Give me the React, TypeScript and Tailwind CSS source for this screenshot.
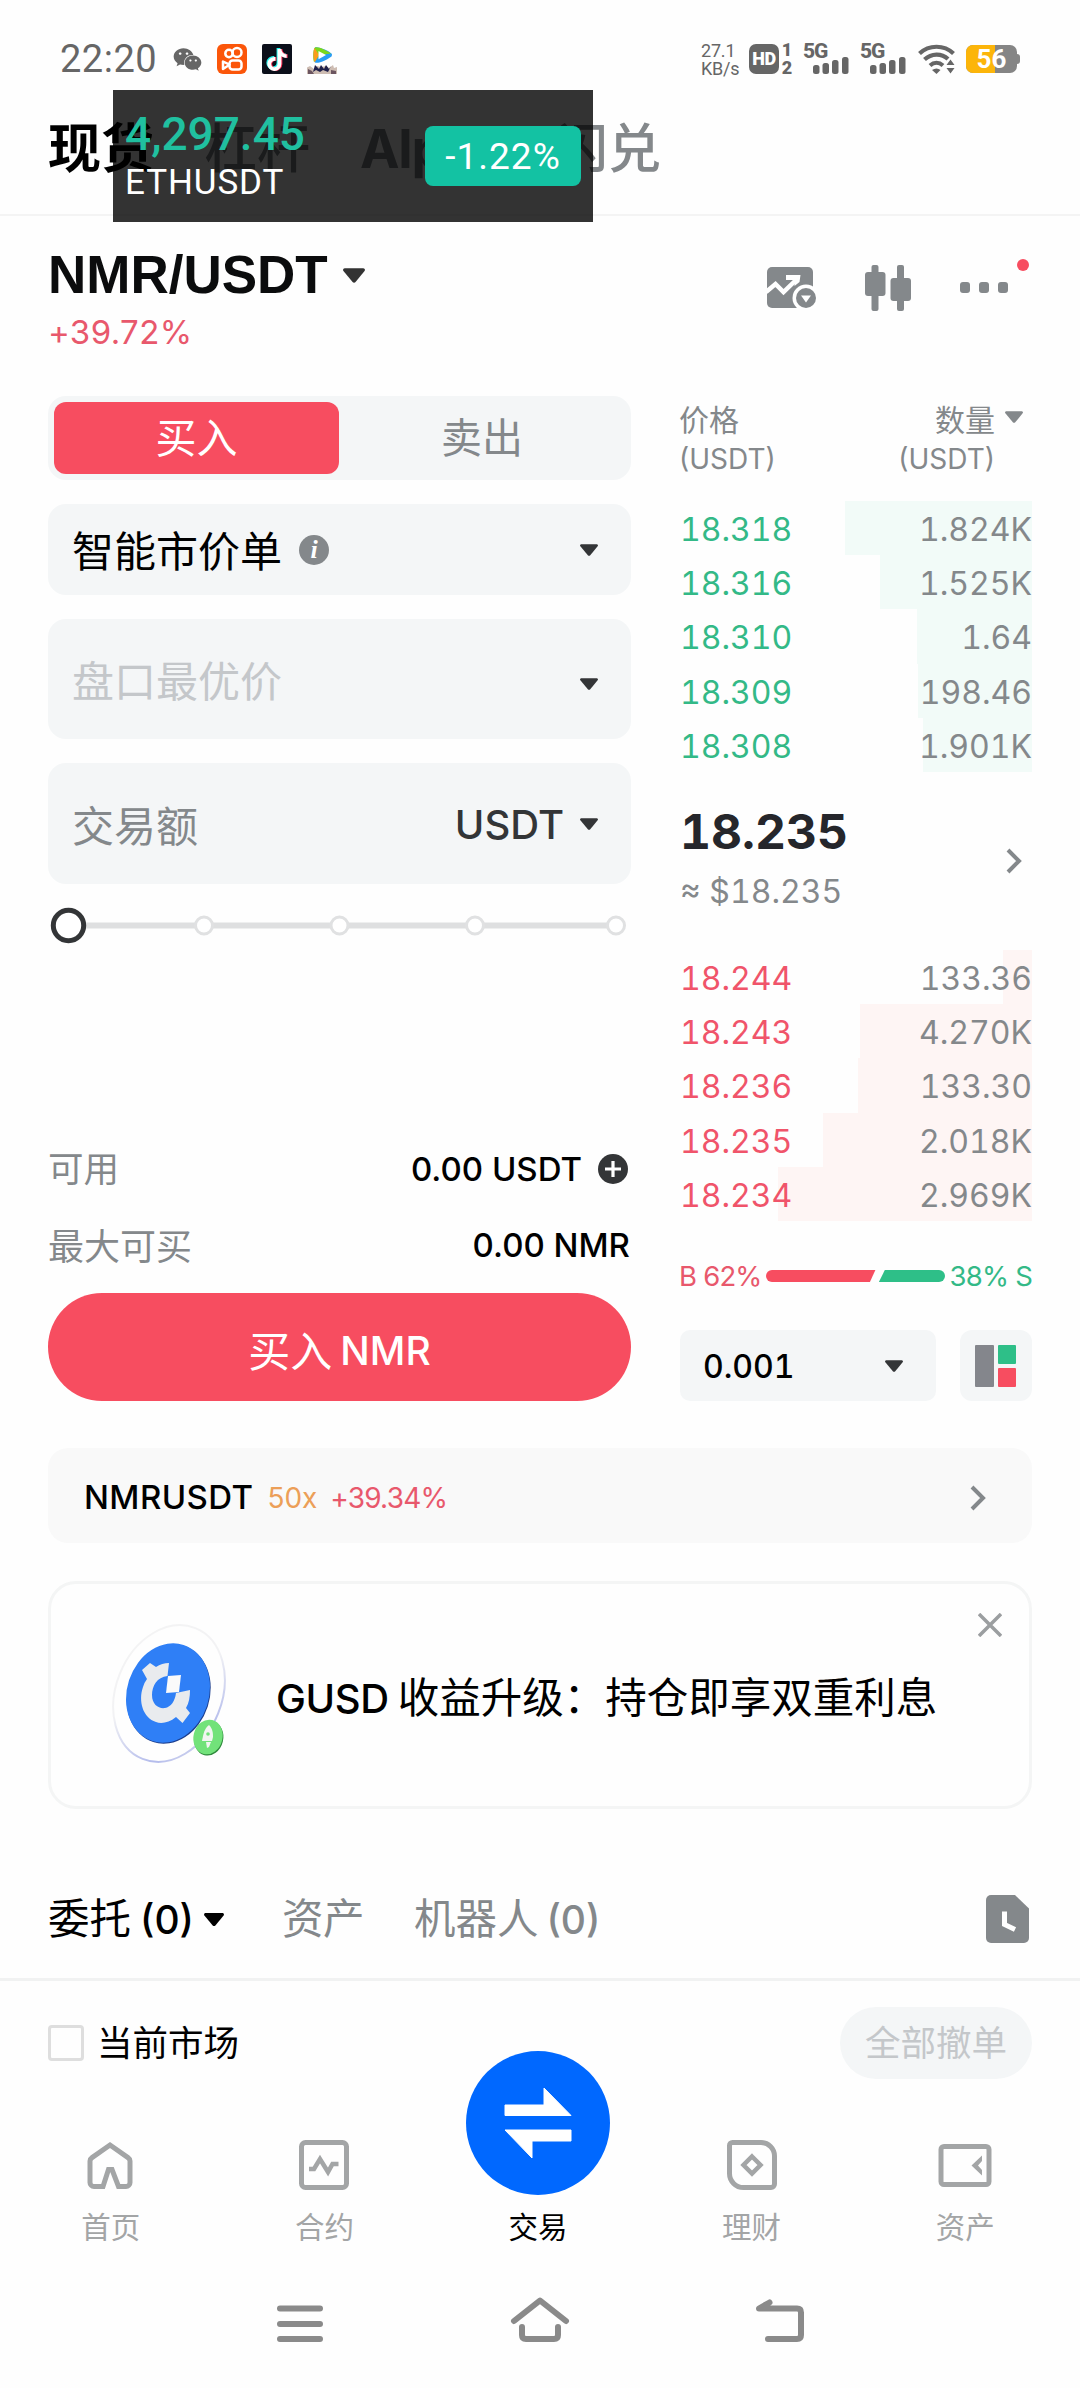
import type { ReactNode } from "react";
import clsx from "clsx";
import { FaTiktok, FaWeixin } from "react-icons/fa";

type BookRow = { price: string; amount: string; depth: number };

const asks: BookRow[] = [
  { price: "18.318", amount: "1.824K", depth: 187 },
  { price: "18.316", amount: "1.525K", depth: 152 },
  { price: "18.310", amount: "1.64", depth: 115 },
  { price: "18.309", amount: "198.46", depth: 114 },
  { price: "18.308", amount: "1.901K", depth: 109 },
];

const bids: BookRow[] = [
  { price: "18.244", amount: "133.36", depth: 29 },
  { price: "18.243", amount: "4.270K", depth: 172 },
  { price: "18.236", amount: "133.30", depth: 174 },
  { price: "18.235", amount: "2.018K", depth: 209 },
  { price: "18.234", amount: "2.969K", depth: 254 },
];

const Caret = ({ className }: { className?: string }) => (
  <svg viewBox="0 0 20 13" className={className} fill="currentColor">
    <path d="M1.600 0h16.800c1.300 0 2 1.400 1.200 2.400l-8.200 10c-.7.8-2 .8-2.700 0L.4 2.400C-.4 1.400.3 0 1.600 0z" />
  </svg>
);

const Chevron = ({ className }: { className?: string }) => (
  <svg
    viewBox="0 0 16 26"
    className={className}
    fill="none"
    stroke="#84888b"
    strokeWidth="4"
  >
    <path d="M2 2l11 11L2 24" />
  </svg>
);

const Signal = () => (
  <div className="relative w-[46px] h-[30px]">
    <span className="absolute left-0 -top-px text-[21px] leading-[17px] font-extrabold tracking-[-1.2px] font-['Roboto',sans-serif]">
      5G
    </span>
    <svg
      viewBox="0 0 36 17"
      className="absolute right-0 bottom-0 w-[36px] h-[17px]"
      fill="currentColor"
    >
      <rect x="0" y="8" width="6.5" height="9" rx="2.5" />
      <rect x="9.5" y="6" width="6.5" height="11" rx="2.5" />
      <rect x="19" y="3" width="6.5" height="14" rx="2.5" />
      <rect x="29" y="0" width="6.5" height="17" rx="2.5" />
    </svg>
  </div>
);

const StatusBar = () => (
  <div className="flex items-center h-[90px] pt-[28px] pl-[60px] pr-[60px] text-[#666] font-['Roboto',sans-serif]">
    <span className="w-[113px] text-[38px] leading-none tracking-[0.5px]">
      22:20
    </span>
    <FaWeixin className="w-[29px] h-[27px]" />
    <div className="ml-[15px] w-[30px] h-[30px] rounded-[6px] bg-[#fb560a]">
      <svg
        viewBox="0 0 30 30"
        fill="none"
        stroke="#fff"
        strokeWidth="2.5"
        strokeLinejoin="round"
      >
        <circle cx="12" cy="9.5" r="3.7" />
        <circle cx="20" cy="8.5" r="4.5" />
        <rect x="12.5" y="16.5" width="12" height="9" rx="3" />
        <path d="M12.500 20.700L6 17.500v7.500z" />
      </svg>
    </div>
    <div className="ml-[15px] relative w-[30px] h-[30px] rounded-[2px] bg-[#0b0f1a]">
      <FaTiktok className="absolute left-[4px] top-[4px] w-[20px] h-[22px] text-[#25f4ee]" />
      <FaTiktok className="absolute left-[6px] top-[5px] w-[20px] h-[22px] text-[#fe2c55]" />
      <FaTiktok className="absolute left-[5px] top-[4.5px] w-[20px] h-[22px] text-white" />
    </div>
    <svg viewBox="0 0 30 30" className="ml-[15px] w-[30px] h-[30px]">
      <path d="M8 3.500C11 2 22 7 24.500 9.500c.8.9.6 2 0 2.700C22 15 11 20 8 18.500c-2-1-2-14 0-15z" fill="#2a9df4" />
      <path d="M8 3.500C11 2 20 6.500 24 9.500L13 11 7 18C6 16 6 5 8 3.500z" fill="#7bd81c" />
      <path d="M7.500 4C6 6 6 16 7.800 18.200L12 11z" fill="#fb9c1b" />
      <path d="M11.500 7l7.500 4-7.500 4.300z" fill="#fff" />
      <path d="M0 23.500l3-1.500 4 3 3-3 4 1 5-1 3 2 4-3 1 3 3-1v7H0z" fill="#cdbcb2" />
      <path d="M8 21l4 4 2-4 3 4 2-4 3 4 2-3-3 6-5-2-3 2-4-2-3 2z" fill="#20204a" />
      <path d="M1 25l4 2 2 3H1zM24 26l5 1v3h-5z" fill="#6b5560" />
    </svg>

    <div className="ml-auto flex flex-col w-[38px] gap-[1px] text-[18px] leading-[17px] tracking-[-0.2px]">
      <span>27.1</span>
      <span>KB/s</span>
    </div>
    <div className="ml-[10px] flex items-center justify-center w-[30px] h-[30px] rounded-[7px] bg-[#666] text-white text-[18px] font-black leading-none tracking-[-0.5px]">
      HD
    </div>
    <div className="ml-[2px] flex flex-col items-center justify-between w-[12px] h-[34px] text-[18px] font-black leading-[16px]">
      <span>1</span>
      <span>2</span>
    </div>
    <div className="ml-[10px] flex gap-[11px]">
      <Signal />
      <Signal />
    </div>
    <svg viewBox="0 0 38 30" className="ml-[12px] w-[38px] h-[30px]">
      <g fill="none" stroke="#666" strokeWidth="4.2">
        <path d="M1.500 9.500C11 .5 26 .5 35.500 9.500" />
        <path d="M6.500 15.500C13.500 9 23.500 9 30 15" />
        <path d="M12 21.500c4-3.500 9-3.500 13 0" />
      </g>
      <path d="M14 26c3-2 6-2 8.500 0L18.500 30z" fill="#666" />
      <path d="M32.500 15.500l4 5.500h-8zM32.500 29.500l4-5.500h-8z" fill="#666" />
    </svg>
    <div className="ml-[10px] flex items-center">
      <div className="relative flex items-center justify-center w-[51px] h-[28px] rounded-[7px] overflow-hidden bg-[#858585]">
        <div className="absolute left-0 top-0 h-full w-[29px] bg-[#fcb50a]" />
        <span className="relative text-white text-[26px] font-bold leading-none">
          56
        </span>
      </div>
      <div className="w-[3px] h-[10px] rounded-r bg-[#858585]" />
    </div>
  </div>
);

const PriceOverlay = () => (
  <div className="absolute left-[113px] top-[90px] w-[480px] h-[132px] bg-black/80 font-['Roboto',sans-serif]">
    <div className="flex items-start justify-between h-full px-[12px]">
      <div className="flex flex-col pt-[21px]">
        <span className="text-[46px] leading-[46px] text-[#20c0a0] font-medium">
          4,297.45
        </span>
        <span className="mt-[8px] text-[35px] leading-[36px] text-white tracking-[0.9px]">
          ETHUSDT
        </span>
      </div>
      <div className="mt-[36px] flex items-center justify-center w-[156px] h-[60px] rounded-[8px] bg-[#13c2a3] text-white text-[37px] leading-none tracking-[1px]">
        -1.22%
      </div>
    </div>
  </div>
);

const PairHeader = () => (
  <div className="flex justify-between h-[180px] pl-[48px] pr-[50px]">
    <div className="flex flex-col pt-[31px]">
      <div className="flex items-center gap-[15px] text-[#0b0c0d]">
        <h1 className="text-[53px] leading-[56px] font-bold font-['Liberation_Sans',sans-serif]">
          NMR/USDT
        </h1>
        <Caret className="w-[22px] h-[15px] text-[#333]" />
      </div>
      <span className="mt-[9px] text-[33px] leading-[40px] tracking-[0.4px] text-[#e8586c]">
        +39.72%
      </span>
    </div>
    <div className="flex items-start pt-[49px] text-[#84888b]">
      <svg viewBox="0 0 50 42" className="mt-[2px] w-[50px] h-[42px]">
        <rect x="0" y="0" width="46" height="41" rx="5" fill="currentColor" />
        <path
          d="M-1 25l9.500-8 8 8L29 13"
          fill="none"
          stroke="#fff"
          strokeWidth="4.5"
        />
        <path d="M19 8h14.500l-1 7-5 4v-6H19z" fill="#fff" />
        <circle cx="39" cy="31" r="13.5" fill="#fff" />
        <circle cx="39" cy="31" r="10" fill="currentColor" />
        <path d="M34 28.500h10L39 35.500z" fill="#fff" />
      </svg>
      <svg
        viewBox="0 0 46 46"
        className="ml-[48px] w-[46px] h-[46px]"
        fill="currentColor"
      >
        <rect x="6.5" y="0" width="7" height="46" rx="2" />
        <rect x="0" y="7" width="20.5" height="24" rx="3" />
        <rect x="32" y="0" width="7" height="46" rx="2" />
        <rect x="25.5" y="13" width="20.5" height="23" rx="3" />
      </svg>
      <div className="relative ml-[49px] mt-[17px] mr-[22px] flex gap-[9px]">
        <span className="w-[10px] h-[11px] rounded-[3px] bg-[#84888b]" />
        <span className="w-[10px] h-[11px] rounded-[3px] bg-[#84888b]" />
        <span className="w-[10px] h-[11px] rounded-[3px] bg-[#84888b]" />
        <span className="absolute left-[57px] -top-[23px] w-[12px] h-[12px] rounded-full bg-[#f74d60]" />
      </div>
    </div>
  </div>
);

const Field = ({
  className,
  children,
}: {
  className?: string;
  children: ReactNode;
}) => (
  <div
    className={clsx(
      "flex items-center pl-[24px] pr-[33px] rounded-[18px] bg-[#f4f6f7] text-[42px]",
      className
    )}
  >
    {children}
  </div>
);

const AmountSlider = () => (
  <svg viewBox="0 0 583 40" className="mt-[22px] w-[583px] h-[40px]">
    <path d="M30 19.500H568" stroke="#dedfe0" strokeWidth="6" />
    {[156, 291.5, 427, 568].map((x) => (
      <circle
        key={x}
        cx={x}
        cy="19.5"
        r="8.5"
        fill="#fff"
        stroke="#e0e1e2"
        strokeWidth="3"
      />
    ))}
    <circle
      cx="20.5"
      cy="19.5"
      r="15.2"
      fill="#fff"
      stroke="#333537"
      strokeWidth="5"
    />
  </svg>
);

const OrderForm = () => (
  <div className="flex flex-col w-[583px]">
    <div className="flex h-[84px] p-[6px] rounded-[18px] bg-[#f4f6f7] text-[41px]">
      <div className="flex items-center justify-center w-[285px] pt-[2px] rounded-[12px] bg-[#f74d60] text-white">
        买入
      </div>
      <div className="flex flex-1 items-center justify-center pt-[2px] text-[#84888b]">
        卖出
      </div>
    </div>
    <Field className="mt-[24px] h-[91px] text-black">
      <span className="pt-[4px]">智能市价单</span>
      <span className="ml-[17px] flex items-center justify-center w-[30px] h-[30px] rounded-full bg-[#84888b] text-white text-[26px] leading-none italic font-bold font-['Liberation_Serif',serif]">
        i
      </span>
      <Caret className="ml-auto w-[18px] h-[12px] text-[#333537]" />
    </Field>
    <Field className="mt-[24px] h-[120px] text-[#c4c7ca]">
      <span className="pt-[5px]">盘口最优价</span>
      <Caret className="ml-auto mt-[10px] w-[18px] h-[12px] text-[#333537]" />
    </Field>
    <Field className="mt-[24px] h-[121px] text-[#84888b]">
      <span className="pt-[5px]">交易额</span>
      <span className="ml-auto pt-[2px] text-[40px] font-medium text-[#333537]">
        USDT
      </span>
      <Caret className="ml-[16px] w-[18px] h-[12px] text-[#333537]" />
    </Field>
    <AmountSlider />

    <div className="mt-[198px] flex items-center justify-between h-[50px]">
      <span className="pt-[2px] text-[35.5px] text-[#84888b]">可用</span>
      <div className="flex items-center gap-[16px] pr-[3px]">
        <span className="pt-[2px] text-[33px] font-medium">0.00 USDT</span>
        <svg viewBox="0 0 30 30" className="w-[30px] h-[30px]">
          <circle cx="15" cy="15" r="15" fill="#333537" />
          <path d="M7 15h16M15 7v16" stroke="#fff" strokeWidth="3.2" />
        </svg>
      </div>
    </div>
    <div className="mt-[26px] flex items-center justify-between h-[50px]">
      <span className="pt-[4px] text-[36px] text-[#84888b]">最大可买</span>
      <span className="pt-[2px] text-[33px] font-medium pr-[1px]">
        0.00 NMR
      </span>
    </div>
    <button className="mt-auto flex items-center justify-center gap-[8px] h-[108px] pt-[8px] rounded-full bg-[#f74d60] text-white text-[42px]">
      买入
      <span className="text-[39px] font-medium">NMR</span>
    </button>
  </div>
);

const BookSide = ({
  rows,
  priceClass,
  barClass,
}: {
  rows: BookRow[];
  priceClass: string;
  barClass: string;
}) => (
  <div className="flex flex-col">
    {rows.map((row) => (
      <div
        key={row.price}
        className="relative flex items-center justify-between h-[54.2px] pt-[4px] text-[32px] tabular-nums"
      >
        <div
          className={clsx("absolute inset-y-0 right-0", barClass)}
          style={{ width: row.depth }}
        />
        <span className={clsx("relative", priceClass)}>{row.price}</span>
        <span className="relative text-[#84888b]">{row.amount}</span>
      </div>
    ))}
  </div>
);

const OrderBook = () => (
  <div className="flex flex-col w-[352px]">
    <div className="flex justify-between h-[105px] pt-[4px] text-[#84888b]">
      <div className="flex flex-col -ml-px">
        <span className="text-[30px] leading-[40px]">价格</span>
        <span className="text-[28px] leading-[39px]">(USDT)</span>
      </div>
      <div className="flex gap-[10px] pr-[9px]">
        <div className="flex flex-col items-end">
          <span className="text-[30px] leading-[40px]">数量</span>
          <span className="text-[28px] leading-[39px]">(USDT)</span>
        </div>
        <Caret className="mt-[11px] w-[18px] h-[12px]" />
      </div>
    </div>
    <BookSide
      rows={asks}
      priceClass="text-[#33b987]"
      barClass="bg-[#f2fbf8]"
    />
    <div className="flex items-center justify-between h-[178px] pr-[10px]">
      <div className="flex flex-col -mt-[4px]">
        <span className="text-[48px] leading-[56px] font-bold tabular-nums text-[#25262b]">
          18.235
        </span>
        <span className="mt-[10px] text-[32px] leading-[44px] tabular-nums text-[#84888b]">
          ≈ $18.235
        </span>
      </div>
      <Chevron className="w-[16px] h-[26px]" />
    </div>
    <BookSide
      rows={bids}
      priceClass="text-[#f0546a]"
      barClass="bg-[#fef5f4]"
    />
    <div className="mt-[36px] flex items-center justify-between h-[38px] text-[27.5px] tracking-[-0.8px]">
      <span className="-ml-px pt-[2px] text-[#e8586c]">B 62%</span>
      <svg viewBox="0 0 180 12" className="w-[179px] h-[12px]">
        <path d="M6 0H110L104.500 12H6A6 6 0 0 1 6 0z" fill="#f74d60" />
        <path d="M119.500 0H174A6 6 0 0 1 174 12H113.500z" fill="#2ebf88" />
      </svg>
      <span className="pt-[2px] text-[#33b987]">38% S</span>
    </div>
    <div className="mt-auto flex justify-between">
      <div className="flex items-center justify-between w-[256px] h-[71px] pl-[23px] pr-[33px] rounded-[10px] bg-[#f4f6f7]">
        <span className="pt-[2px] text-[32px] font-medium tabular-nums text-black">
          0.001
        </span>
        <Caret className="w-[18px] h-[12px] text-[#333537]" />
      </div>
      <div className="flex items-center justify-center w-[72px] h-[71px] rounded-[12px] bg-[#f4f6f7]">
        <svg viewBox="0 0 42 42" className="w-[42px] h-[42px]">
          <rect x="0" y="0" width="19" height="42" rx="1" fill="#84868c" />
          <rect x="23" y="0" width="18" height="19" rx="1" fill="#2ebf88" />
          <rect x="23" y="23" width="18" height="19" rx="1" fill="#f74d60" />
        </svg>
      </div>
    </div>
  </div>
);

const GusdCoin = () => (
  <svg viewBox="0 0 120 144" className="w-[120px] h-[144px]">
    <defs>
      <linearGradient id="rim" x1="0" y1="0" x2="1" y2="1">
        <stop offset="0" stopColor="#f4f4f4" />
        <stop offset="0.45" stopColor="#f2f2f4" />
        <stop offset="0.8" stopColor="#b4bcec" />
        <stop offset="1" stopColor="#f0f0f0" />
      </linearGradient>
    </defs>
    <g transform="rotate(22 58 70.500)">
      <ellipse
        cx="58"
        cy="70.5"
        rx="53"
        ry="70.5"
        fill="#fefefe"
        stroke="url(#rim)"
        strokeWidth="2"
      />
    </g>
    <g transform="rotate(18 57 70)">
      <ellipse cx="58" cy="70.8" rx="41" ry="50.5" fill="#1c3d8c" />
      <ellipse cx="57" cy="70" rx="41" ry="50.5" fill="#2f7ff6" />
    </g>
    <path
      d="M31 47L39 40l6 4Q51 40 58 40L56.500 53C46 54 41 63 41 72 41 82 48 86 54 85 60 84 64 78 65 70L79 67C79 74 78 80 75 85L79 90 71.500 100 65 94C58 100 50 101 45 99 32 95 27 78 32 64Q33 60 36 56z"
      fill="#e9ebee"
    />
    <path d="M57 53l13-1-2 17-13 1z" fill="#fafafa" />
    <g transform="rotate(14 97 114)">
      <ellipse cx="98" cy="115" rx="14.5" ry="17.5" fill="#2f8a3c" />
      <ellipse cx="97" cy="114" rx="14.5" ry="17.5" fill="#72e27a" />
    </g>
    <path d="M98 102c4 4 4 9 4 12l-1 4H91l1-5c1-4 2-8 6-11z" fill="#f1f5f1" />
    <circle cx="97" cy="111" r="1.8" fill="#72e27a" />
    <path d="M95 119h5l-2 5-2 1z" fill="#f1f5f1" />
  </svg>
);

const navItems = [
  {
    label: "首页",
    icon: (
      <path d="M14.500 46.500H8a4 4 0 0 1-4-4V21c0-1.500.7-2.500 2-3.400L24 5l18 12.600c1.300.9 2 1.900 2 3.400v21.500a4 4 0 0 1-4 4h-7.500L26 29.500h-3.500L17 46.500z" />
    ),
  },
  {
    label: "合约",
    icon: (
      <>
        <rect x="2.5" y="2.5" width="45" height="45" rx="4" />
        <path d="M10 29h5l6-10 8 13 4.500-8h6" strokeWidth="4.5" />
      </>
    ),
  },
  { label: "交易", icon: null },
  {
    label: "理财",
    icon: (
      <>
        <path d="M5.500 2.500H34A13.500 13.500 0 0 1 47.500 16v28a3.500 3.500 0 0 1-3.500 3.500H16.500A14 14 0 0 1 2.500 33.500v-28a3 3 0 0 1 3-3z" />
        <path d="M25 16.500l8.500 8.500-8.500 8.500-8.500-8.500z" strokeWidth="4.5" />
      </>
    ),
  },
  {
    label: "资产",
    icon: (
      <>
        <rect x="1" y="6.5" width="48" height="38" rx="3" />
        <path
          d="M42 15.500v5.500l-4 4.500 4 4.500v5.500L31.500 25.500z"
          fill="currentColor"
          stroke="none"
        />
      </>
    ),
  },
];

const BottomNav = () => (
  <div className="flex h-[180px] pl-[4px] pr-[8px]">
    {navItems.map((item) =>
      item.icon ? (
        <div
          key={item.label}
          className="flex flex-1 flex-col items-center pt-[43px] text-[#a3a5a6]"
        >
          <svg
            viewBox="0 0 50 50"
            className="w-[50px] h-[50px] overflow-visible"
            fill="none"
            stroke="currentColor"
            strokeWidth="5"
          >
            {item.icon}
          </svg>
          <span className="mt-[17px] text-[29.5px] leading-[40px]">
            {item.label}
          </span>
        </div>
      ) : (
        <div
          key={item.label}
          className="flex flex-1 flex-col items-center -mt-[46px] text-black"
        >
          <div className="flex items-center justify-center w-[144px] h-[144px] rounded-full bg-[#0068ff]">
            <svg
              viewBox="0 0 68 72"
              className="w-[68px] h-[72px]"
              fill="#fff"
              stroke="#fff"
              strokeWidth="1"
              strokeLinejoin="round"
            >
              <path d="M1 18H40V1L67 28.500H1z" />
              <path d="M67 43V54H28V71L1 43z" />
            </svg>
          </div>
          <span className="mt-[12px] text-[29.5px] leading-[40px]">
            {item.label}
          </span>
        </div>
      )
    )}
  </div>
);

const SystemNav = () => (
  <svg
    viewBox="0 0 1080 60"
    className="mt-[20px] w-[1080px] h-[60px]"
    fill="none"
    stroke="#8a8a8a"
    strokeWidth="6"
    strokeLinecap="round"
    strokeLinejoin="round"
  >
    <path d="M280 11.500h40M280 27h40M280 42h40" />
    <path d="M514 24l26-20.500L566 24" />
    <path d="M522 30v8q0 4 4 4h28q4 0 4-4v-8" />
    <path d="M768 42h29q4 0 4-4V15.500q0-4-4-4h-38l10.500-6" />
  </svg>
);

export default function App() {
  return (
    <div className="relative flex flex-col w-[1080px] h-[2388px] overflow-hidden bg-[#fefefe] text-black font-['Inter','Noto_Sans_CJK_SC',sans-serif]">
      <StatusBar />
      <div className="flex items-center gap-[50px] h-[126px] pb-[6px] pl-[48px] border-b-[2px] border-[#f4f4f4] text-[53px] leading-none font-medium text-[#84888b]">
        <span className="text-black font-bold">现货</span>
        <span>杠杆</span>
        <span className="font-bold tracking-[-1.2px]">Alpha</span>
        <span>闪兑</span>
      </div>
      <PriceOverlay />
      <PairHeader />

      <div className="flex gap-[49px] h-[1005px] pl-[48px]">
        <OrderForm />
        <OrderBook />
      </div>

      <div className="mt-[47px] mx-[48px] flex items-center h-[95px] pt-[4px] pl-[36px] pr-[46px] rounded-[20px] bg-[#f9f9f9]">
        <span className="text-[33px] font-medium tracking-[0.4px]">
          NMRUSDT
        </span>
        <span className="ml-[14px] text-[28px] text-[#ec9f58]">50x</span>
        <span className="ml-[13px] text-[28px] text-[#e8586c] tracking-[-0.8px]">
          +39.34%
        </span>
        <Chevron className="ml-auto w-[16px] h-[26px]" />
      </div>

      <div className="relative mt-[38px] mx-[48px] flex items-center h-[228px] pl-[60px] border-[3px] border-[#f4f5f5] rounded-[28px] text-[41.5px]">
        <GusdCoin />
        <span className="ml-[45px] pt-[7px]">
          <span className="mr-[9px] text-[40px] font-medium tracking-[-0.4px]">
            GUSD
          </span>
          收益升级：持仓即享双重利息
        </span>
        <svg
          viewBox="0 0 24 24"
          className="absolute right-[27px] top-[29px] w-[24px] h-[24px]"
          stroke="#9b9ea0"
          strokeWidth="3.5"
        >
          <path d="M1 1l22 22M23 1L1 23" />
        </svg>
      </div>

      <div className="flex items-center h-[172px] pt-[51px] pl-[48px] pr-[51px] border-b-[3px] border-[#f1f2f2] text-[41.5px] text-[#84888b]">
        <span className="text-black">
          委托<span className="ml-[9px] text-[39px] font-medium">(0)</span>
        </span>
        <Caret className="ml-[10px] w-[20px] h-[13px] text-black" />
        <span className="ml-[58px] tracking-[-0.5px]">资产</span>
        <span className="ml-[50px]">
          机器人<span className="ml-[8px] text-[39px] font-medium">(0)</span>
        </span>
        <svg viewBox="0 0 43 48" className="ml-auto w-[43px] h-[48px]">
          <path
            d="M5 0H29L43 13.500V43a5 5 0 0 1-5 5H5a5 5 0 0 1-5-5V5a5 5 0 0 1 5-5z"
            fill="#84888b"
          />
          <path
            d="M18.500 16.500V29.500L29 34.500"
            fill="none"
            stroke="#fff"
            strokeWidth="5"
          />
        </svg>
      </div>

      <div className="flex items-center justify-between h-[116px] pt-[7px] px-[48px]">
        <div className="flex items-center gap-[13px]">
          <div className="w-[36px] h-[36px] rounded-[4px] border-[3px] border-[#dedede]" />
          <span className="pt-[3px] text-[35.5px]">当前市场</span>
        </div>
        <button className="w-[192px] h-[72px] pt-[3px] rounded-full bg-[#f4f6f7] text-[35.5px] leading-none text-[#c4c7ca]">
          全部撤单
        </button>
      </div>

      <BottomNav />
      <SystemNav />
    </div>
  );
}
